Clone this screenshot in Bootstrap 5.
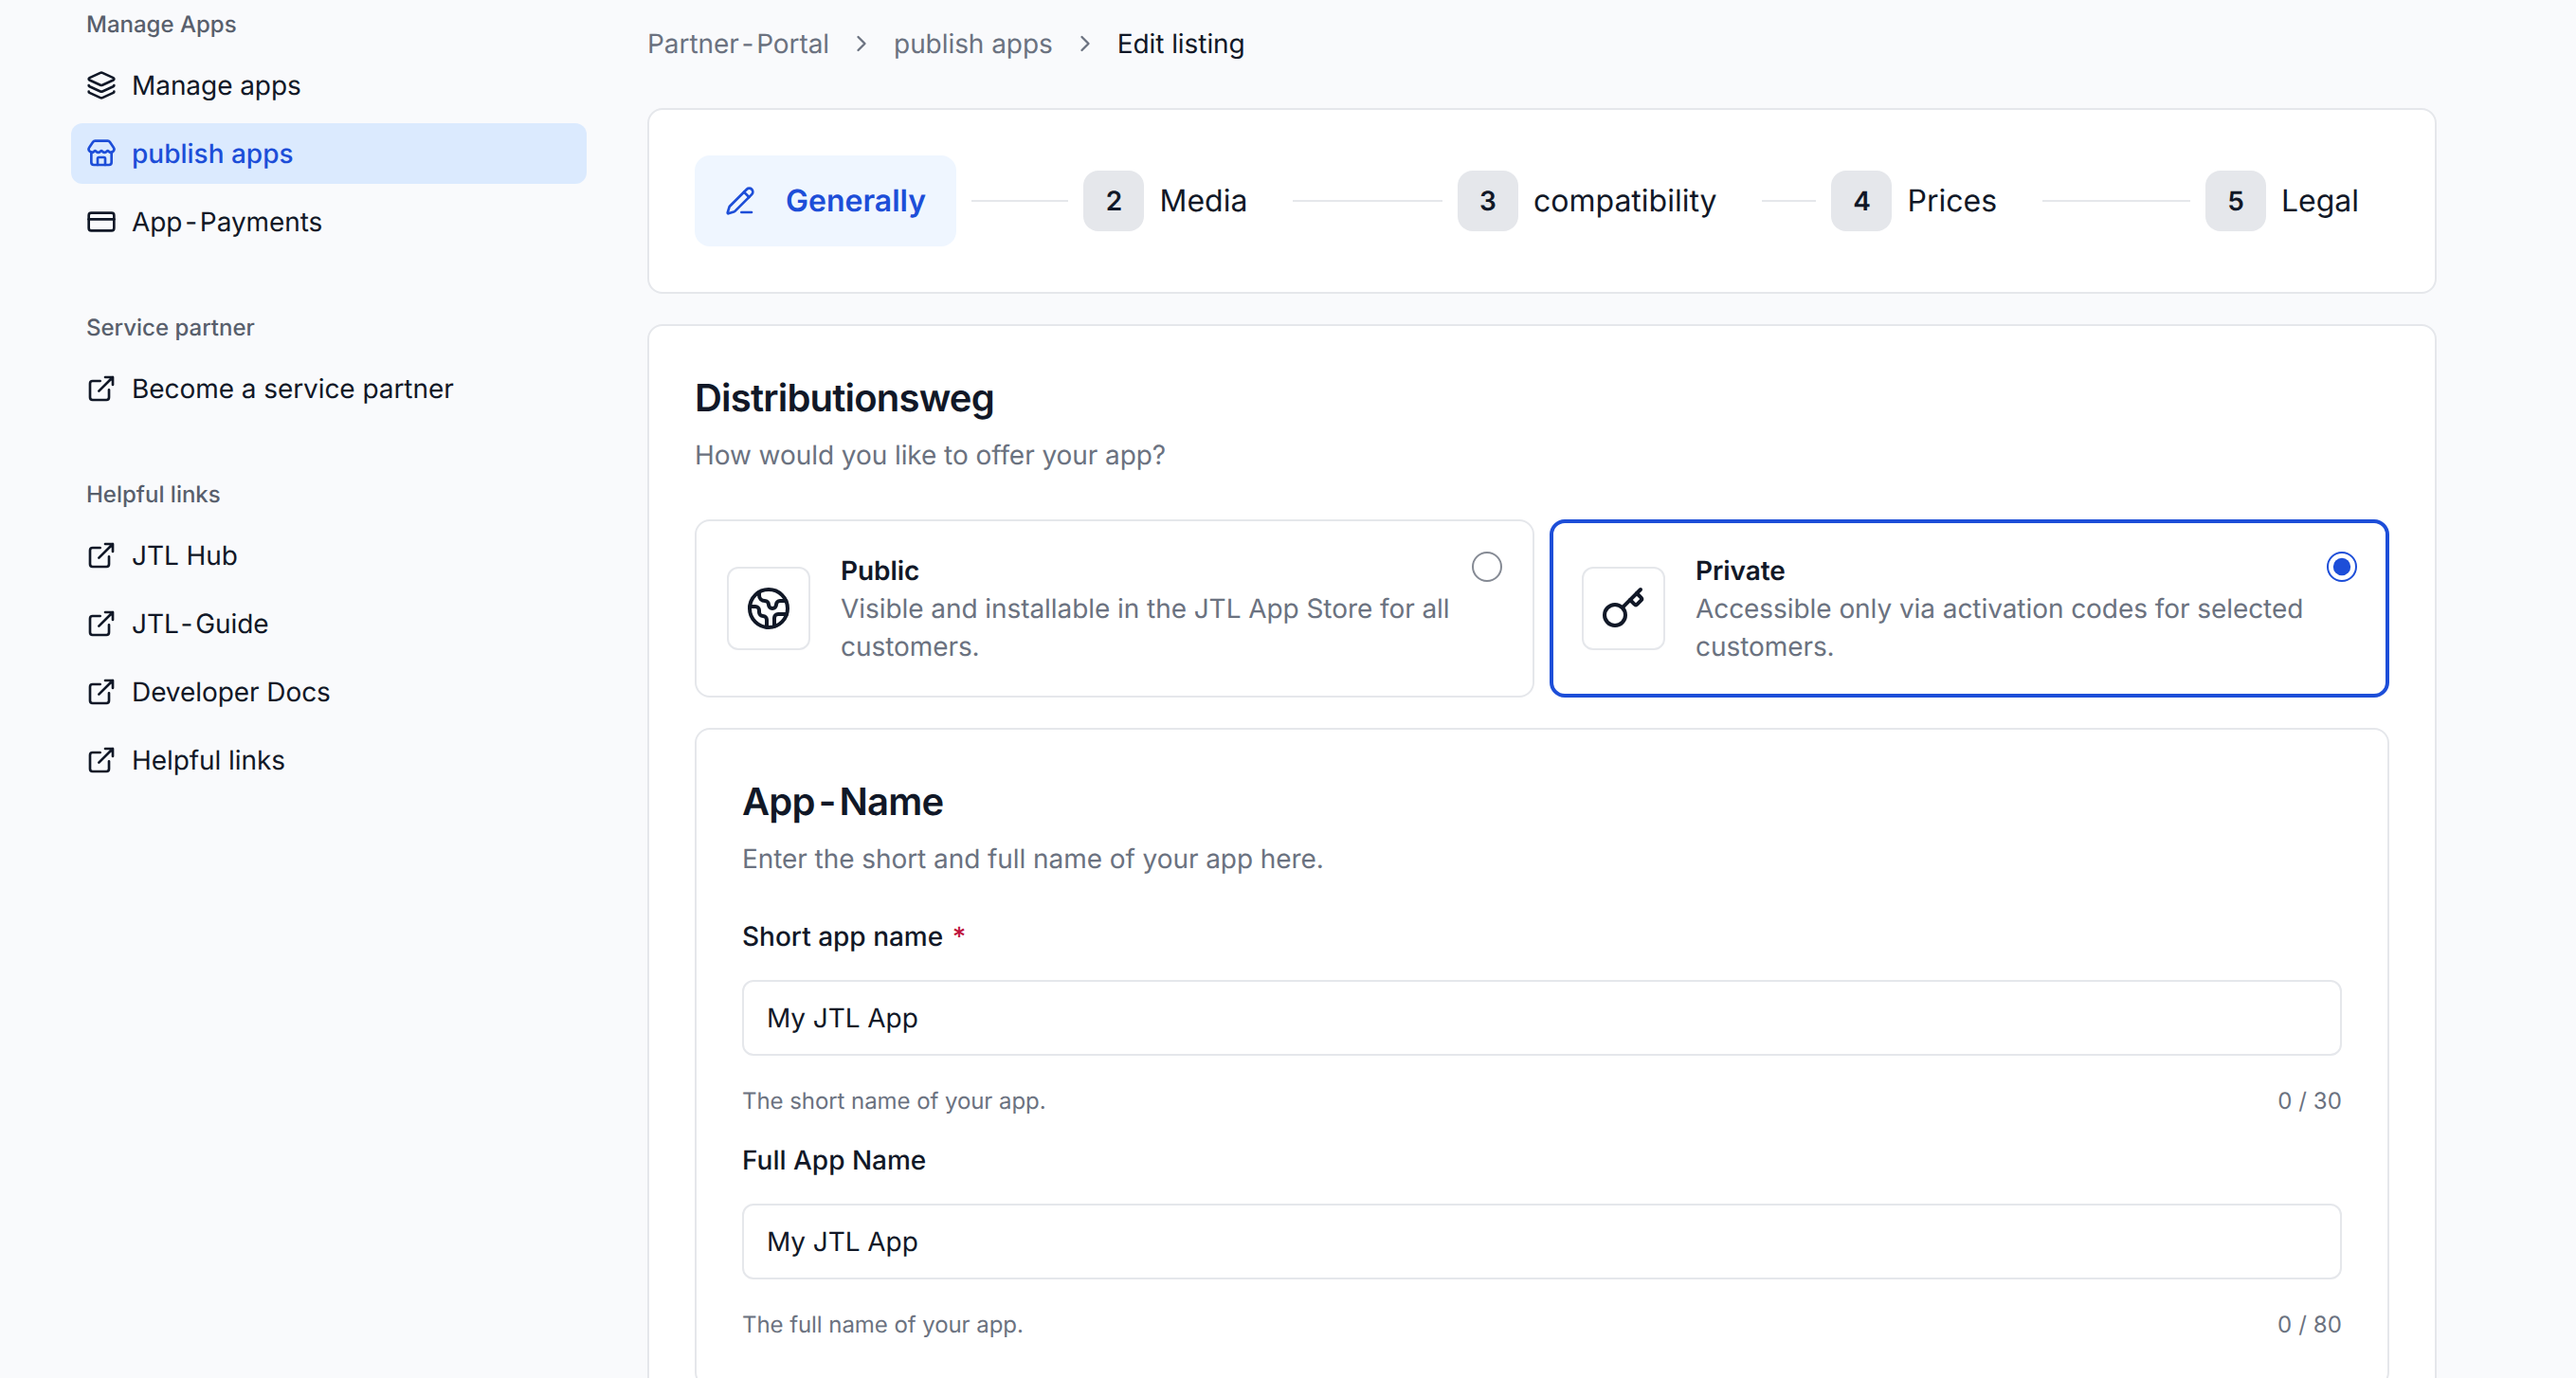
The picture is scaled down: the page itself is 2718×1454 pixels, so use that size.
<!DOCTYPE html>
<html lang="en">
<head>
<meta charset="utf-8">
<meta name="viewport" content="width=device-width, initial-scale=1">
<title>Partner-Portal – Edit listing</title>
<link href="https://cdn.jsdelivr.net/npm/bootstrap@5.3.0/dist/css/bootstrap.min.css" rel="stylesheet">
<style>
  :root { --ink:#111827; --muted:#6b7280; --line:#e5e7eb; --brand:#1d4ed8; }
  body { font-family:Inter,"Liberation Sans",sans-serif; font-size:28px; line-height:40px; letter-spacing:-.065px; color:var(--ink); background:#f9fafc; height:1454px; overflow:hidden; text-rendering:geometricPrecision; }
  svg { fill:none; stroke:currentColor; stroke-width:2; stroke-linecap:round; stroke-linejoin:round; flex:none; }
  .hy { padding:0 2.8px; }
  .hy-tight { padding-left:1.8px; }
  .muted { color:var(--muted); }
  .side { width:619px; padding-left:75px; margin-top:-6px; }
  .side-group + .side-group { margin-top:48px; }
  .side-label { height:64px; padding:0 16px; font-size:24px; font-weight:500; letter-spacing:0; color:#585f6c; }
  .side .nav { gap:8px; }
  .side .nav-link { height:64px; padding:0 16px; gap:16px; color:var(--ink); border-radius:12px; }
  .side .nav-link.active { background:#dbeafe; color:var(--brand); font-weight:500; letter-spacing:0; }
  .side svg { width:32px; height:32px; }
  .content { width:1952px; padding-left:64px; padding-top:26px; }
  .crumbs { gap:20px; height:40px; margin-bottom:48px; }
  .crumbs svg { width:28px; height:28px; color:var(--muted); }
  .crumbs .here { color:var(--ink); }
  .panel { background:#fff; border:2px solid var(--line); border-radius:16px; padding:48px; }
  .panel + .panel { margin-top:32px; }
  .steps { font-size:32px; letter-spacing:0; }
  .step-item { flex:1 1 0; min-width:0; }
  .step-item:last-child { flex:none; }
  .step-btn { height:96px; padding:0 32px 0 16px; gap:16px; border-radius:16px; white-space:nowrap; }
  .step-btn.active { background:#eff6ff; color:var(--brand); font-weight:600; }
  .step-no { width:64px; height:64px; border-radius:16px; background:var(--line); font-size:28px; font-weight:600; }
  .active .step-no { background:none; }
  .step-no svg { width:32px; height:32px; }
  .step-rule { height:2px; background:var(--line); margin-left:16px; flex:1; }
  .sec-title { font-size:40px; line-height:56px; font-weight:600; letter-spacing:-.8px; margin:0 0 12px; }
  .sec-title .hy { padding:0 4px; }
  .sec-sub { margin:0 0 48px; }
  .options { gap:16px; margin-bottom:32px; }
  .option { flex:1 1 0; height:188px; border:2px solid var(--line); border-radius:16px; padding:0 32px; gap:32px; }
  .option.chosen { border:4px solid var(--brand); padding:0 30px; }
  .option-icon { width:88px; height:88px; border:2px solid var(--line); border-radius:12px; flex:none; }
  .option-icon svg { width:48px; height:48px; }
  .option .radio { width:32px; height:32px; align-self:flex-start; color:#858a94; margin:32px 0 0 -16px; }
  .option.chosen .radio { margin-top:30px; color:var(--brand); }
  .field-label { font-weight:500; line-height:28px; letter-spacing:0; margin-bottom:32px; }
  .req { color:#be123c; margin-left:2px; }
  .field.form-control { height:80px; border:2px solid var(--line); border-radius:12px; padding:0 24px; font-size:28px; line-height:40px; letter-spacing:-.065px; color:var(--ink); text-rendering:geometricPrecision; }
  .hint { font-size:24px; line-height:32px; margin-top:32px; }
  .hint span + span { letter-spacing:.1px; }
  .field-group + .field-group { margin-top:32px; }
</style>
</head>
<body>
<svg width="0" height="0" class="position-absolute" aria-hidden="true">
  <symbol id="ext" viewBox="0 0 24 24"><path d="M15 3h6v6M10 14 21 3M18 13v6a2 2 0 0 1-2 2H5a2 2 0 0 1-2-2V8a2 2 0 0 1 2-2h6"/></symbol>
  <symbol id="chev" viewBox="0 0 24 24"><path d="m9 18 6-6-6-6"/></symbol>
</svg>
<div class="d-flex align-items-start">
  <aside class="side flex-shrink-0">
    <div class="side-group">
      <div class="side-label d-flex align-items-center">Manage Apps</div>
      <nav class="nav flex-column">
        <a class="nav-link d-flex align-items-center" href="#">
          <svg viewBox="0 0 24 24"><path d="M12.83 2.18a2 2 0 0 0-1.66 0L2.6 6.08a1 1 0 0 0 0 1.83l8.58 3.91a2 2 0 0 0 1.66 0l8.58-3.9a1 1 0 0 0 0-1.83z"/><path d="M2 12a1 1 0 0 0 .58.91l8.6 3.91a2 2 0 0 0 1.65 0l8.58-3.9A1 1 0 0 0 22 12"/><path d="M2 17a1 1 0 0 0 .58.91l8.6 3.91a2 2 0 0 0 1.65 0l8.58-3.9A1 1 0 0 0 22 17"/></svg>
          <span>Manage apps</span></a>
        <a class="nav-link active d-flex align-items-center" href="#">
          <svg viewBox="0 0 24 24"><path d="M15 21v-5a1 1 0 0 0-1-1h-4a1 1 0 0 0-1 1v5"/><path d="M17.774 10.31a1.12 1.12 0 0 0-1.549 0 2.5 2.5 0 0 1-3.451 0 1.12 1.12 0 0 0-1.548 0 2.5 2.5 0 0 1-3.452 0 1.12 1.12 0 0 0-1.549 0 2.5 2.5 0 0 1-3.77-3.248l2.889-4.184A2 2 0 0 1 7 2h10a2 2 0 0 1 1.653.873l2.895 4.192a2.5 2.5 0 0 1-3.774 3.244"/><path d="M4 10.95V19a2 2 0 0 0 2 2h12a2 2 0 0 0 2-2v-8.05"/></svg>
          <span>publish apps</span></a>
        <a class="nav-link d-flex align-items-center" href="#">
          <svg viewBox="0 0 24 24"><rect x="2" y="5" width="20" height="14" rx="2"/><path d="M2 10h20"/></svg>
          <span>App<span class="hy">-</span>Payments</span></a>
      </nav>
    </div>
    <div class="side-group">
      <div class="side-label d-flex align-items-center">Service partner</div>
      <nav class="nav flex-column">
        <a class="nav-link d-flex align-items-center" href="#"><svg><use href="#ext"/></svg><span>Become a service partner</span></a>
      </nav>
    </div>
    <div class="side-group">
      <div class="side-label d-flex align-items-center">Helpful links</div>
      <nav class="nav flex-column">
        <a class="nav-link d-flex align-items-center" href="#"><svg><use href="#ext"/></svg><span>JTL Hub</span></a>
        <a class="nav-link d-flex align-items-center" href="#"><svg><use href="#ext"/></svg><span>JTL<span class="hy hy-tight">-</span>Guide</span></a>
        <a class="nav-link d-flex align-items-center" href="#"><svg><use href="#ext"/></svg><span>Developer Docs</span></a>
        <a class="nav-link d-flex align-items-center" href="#"><svg><use href="#ext"/></svg><span>Helpful links</span></a>
      </nav>
    </div>
  </aside>

  <main class="content flex-shrink-0">
    <nav class="crumbs d-flex align-items-center muted">
      <span>Partner<span class="hy">-</span>Portal</span>
      <svg><use href="#chev"/></svg>
      <span>publish apps</span>
      <svg><use href="#chev"/></svg>
      <span class="here">Edit listing</span>
    </nav>

    <div class="panel steps d-flex">
      <div class="step-item d-flex align-items-center">
        <div class="step-btn active d-flex align-items-center">
          <span class="step-no d-flex align-items-center justify-content-center"><svg viewBox="0 0 24 24"><path d="M13 21h8"/><path d="m15 5 4 4"/><path d="M21.174 6.812a1 1 0 0 0-3.986-3.987L3.842 16.174a2 2 0 0 0-.5.83l-1.321 4.352a.5.5 0 0 0 .623.622l4.353-1.32a2 2 0 0 0 .83-.497z"/></svg></span>
          <span>Generally</span></div>
        <div class="step-rule"></div>
      </div>
      <div class="step-item d-flex align-items-center">
        <div class="step-btn d-flex align-items-center"><span class="step-no d-flex align-items-center justify-content-center">2</span><span>Media</span></div>
        <div class="step-rule"></div>
      </div>
      <div class="step-item d-flex align-items-center">
        <div class="step-btn d-flex align-items-center"><span class="step-no d-flex align-items-center justify-content-center">3</span><span>compatibility</span></div>
        <div class="step-rule"></div>
      </div>
      <div class="step-item d-flex align-items-center">
        <div class="step-btn d-flex align-items-center"><span class="step-no d-flex align-items-center justify-content-center">4</span><span>Prices</span></div>
        <div class="step-rule"></div>
      </div>
      <div class="step-item d-flex align-items-center">
        <div class="step-btn d-flex align-items-center"><span class="step-no d-flex align-items-center justify-content-center">5</span><span>Legal</span></div>
      </div>
    </div>

    <section class="panel">
      <h2 class="sec-title">Distributionsweg</h2>
      <p class="sec-sub muted">How would you like to offer your app?</p>
      <div class="options d-flex">
        <div class="option d-flex align-items-center">
          <div class="option-icon d-flex align-items-center justify-content-center"><svg viewBox="0 0 24 24"><path d="M21.54 15H17a2 2 0 0 0-2 2v4.54"/><path d="M7 3.34V5a3 3 0 0 0 3 3a2 2 0 0 1 2 2c0 1.1.9 2 2 2a2 2 0 0 0 2-2c0-1.1.9-2 2-2h3.17"/><path d="M11 21.95V18a2 2 0 0 0-2-2a2 2 0 0 1-2-2v-1a2 2 0 0 0-2-2H2.05"/><circle cx="12" cy="12" r="10"/></svg></div>
          <div class="flex-fill"><div class="fw-semibold">Public</div><div class="muted">Visible and installable in the JTL App Store for all customers.</div></div>
          <svg class="radio" viewBox="0 0 32 32"><circle cx="16" cy="16" r="15"/></svg>
        </div>
        <div class="option chosen d-flex align-items-center">
          <div class="option-icon d-flex align-items-center justify-content-center"><svg viewBox="0 0 24 24"><path d="m15.5 7.5 2.3 2.3a1 1 0 0 0 1.4 0l2.1-2.1a1 1 0 0 0 0-1.4L19 4"/><path d="m21 2-9.6 9.6"/><circle cx="7.5" cy="15.5" r="5.5"/></svg></div>
          <div class="flex-fill"><div class="fw-semibold">Private</div><div class="muted">Accessible only via activation codes for selected customers.</div></div>
          <svg class="radio" viewBox="0 0 32 32"><circle cx="16" cy="16" r="15"/><circle cx="16" cy="16" r="9.2" fill="currentColor" stroke="none"/></svg>
        </div>
      </div>

      <div class="panel">
        <h2 class="sec-title">App<span class="hy">-</span>Name</h2>
        <p class="sec-sub muted">Enter the short and full name of your app here.</p>
        <div class="field-group">
          <label class="field-label d-block" for="short">Short app name <span class="req">*</span></label>
          <input id="short" class="form-control field" value="My JTL App">
          <div class="hint muted d-flex justify-content-between"><span>The short name of your app.</span><span>0 / 30</span></div>
        </div>
        <div class="field-group">
          <label class="field-label d-block" for="full">Full App Name</label>
          <input id="full" class="form-control field" value="My JTL App">
          <div class="hint muted d-flex justify-content-between"><span>The full name of your app.</span><span>0 / 80</span></div>
        </div>
      </div>
    </section>
  </main>
</div>
<script src="https://cdn.jsdelivr.net/npm/bootstrap@5.3.0/dist/js/bootstrap.bundle.min.js"></script>
</body>
</html>
